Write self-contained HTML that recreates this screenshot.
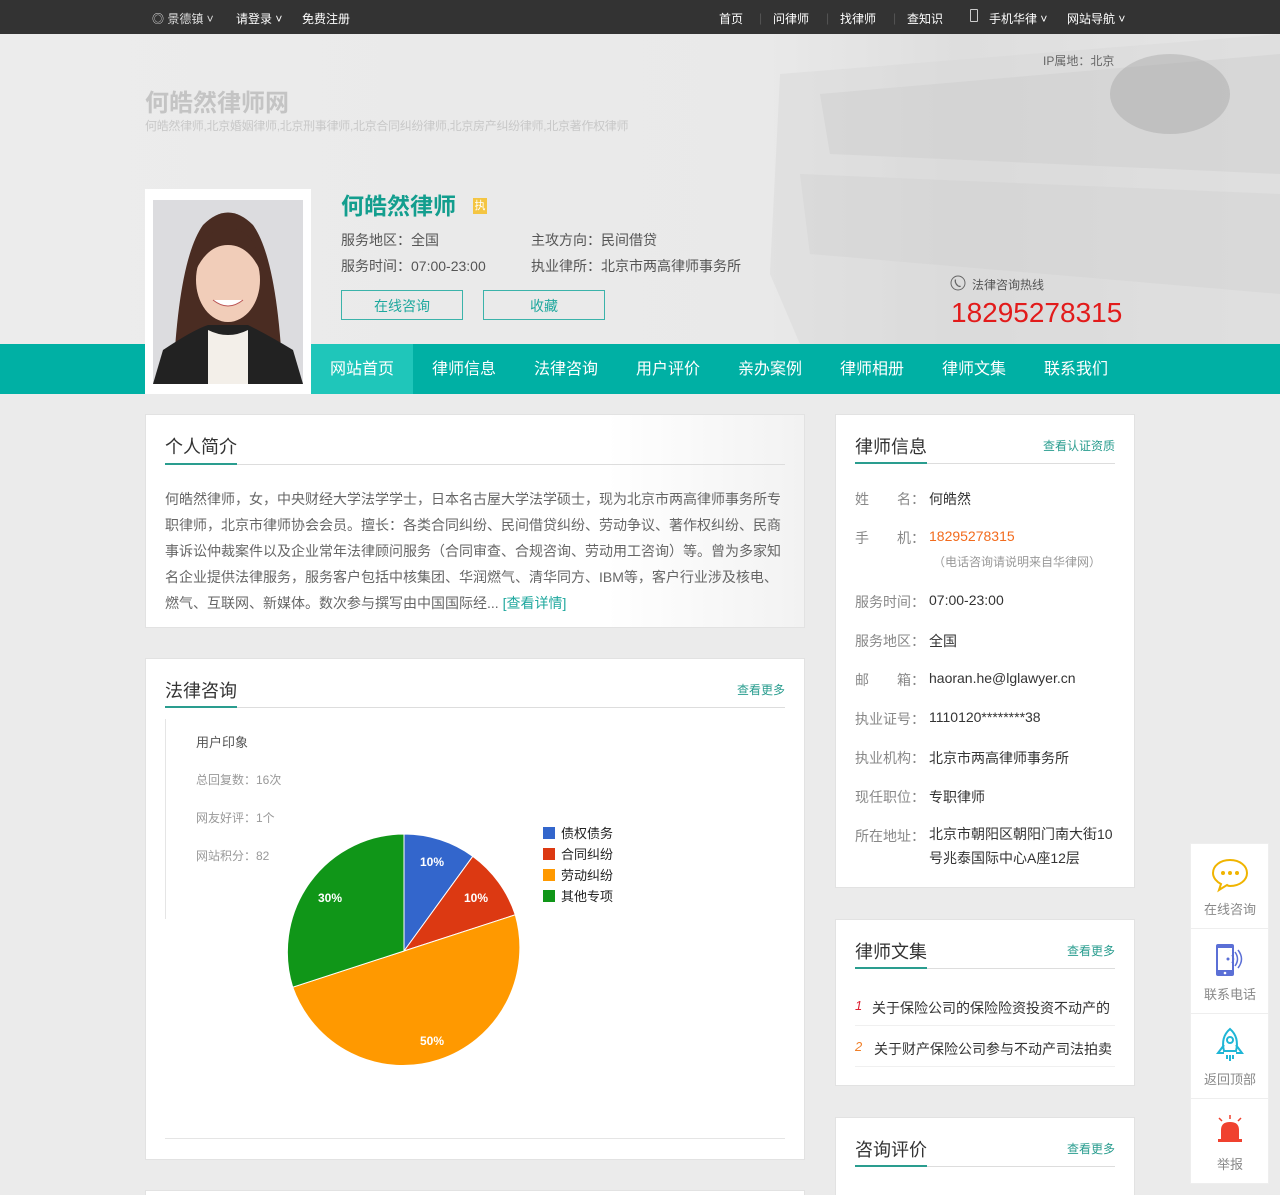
<!DOCTYPE html>
<html><head><meta charset="utf-8"><style>
*{margin:0;padding:0;box-sizing:border-box}
html,body{width:1280px;height:1195px;overflow:hidden}
body{background:#ebebeb;font-family:"Liberation Sans","Noto Sans CJK SC",sans-serif;color:#333;position:relative}
.a{position:absolute;white-space:nowrap}
.top{position:absolute;left:0;top:0;width:1280px;height:34px;background:#333;color:#fff;font-size:12px}
.hero{position:absolute;left:0;top:34px;width:1280px;height:310px;background:linear-gradient(90deg,#ececec 0%,#e9e9e9 60%,#dedede 75%,#e6e6e6 100%);overflow:hidden}
.nav{position:absolute;left:0;top:344px;width:1280px;height:50px;background:#00b0a4}
.nav span{position:absolute;top:0;height:50px;line-height:52px;color:#fff;font-size:16px;width:102px;text-align:center}
.card{position:absolute;background:#fff;border:1px solid #e2e2e2}
.h{position:absolute;font-size:18px;color:#333}
.ul{position:absolute;height:2px;background:#2a9d8f}
.ln{position:absolute;height:1px;background:#ddd}
.more{position:absolute;font-size:12px;color:#2a9d8f}
.lab{color:#888}
.btn{position:absolute;top:290px;width:122px;height:30px;border:1px solid #3bb3aa;color:#1fa89e;font-size:14px;text-align:center;line-height:30px;background:transparent}
</style></head><body>
<div class="top">
<span class="a" style="left:152px;top:10px;color:#ddd">◎ 景德镇 ˅</span>
<span class="a" style="left:236px;top:10px">请登录 ˅</span>
<span class="a" style="left:302px;top:10px">免费注册</span>
<span class="a" style="left:719px;top:10px">首页</span>
<span class="a" style="left:759px;top:11px;color:#555">|</span>
<span class="a" style="left:773px;top:10px">问律师</span>
<span class="a" style="left:826px;top:11px;color:#555">|</span>
<span class="a" style="left:840px;top:10px">找律师</span>
<span class="a" style="left:893px;top:11px;color:#555">|</span>
<span class="a" style="left:907px;top:10px">查知识</span>
<span class="a" style="left:970px;top:9px;width:8px;height:13px;border:1px solid #ccc;border-radius:1px"></span>
<span class="a" style="left:989px;top:10px">手机华律 ˅</span>
<span class="a" style="left:1067px;top:10px">网站导航 ˅</span>
</div>
<div class="hero">
<svg class="a" style="left:740px;top:0" width="540" height="310"><path d="M40 40 L540 0 L540 310 L60 310 L30 240 Z" fill="#d8d8d8" opacity=".45"/><path d="M80 60 L540 20 L540 140 L90 120 Z" fill="#c8c8c8" opacity=".35"/><path d="M60 140 L540 160 L540 260 L70 220 Z" fill="#cfcfcf" opacity=".35"/><ellipse cx="430" cy="60" rx="60" ry="40" fill="#999" opacity=".35"/></svg>
<span class="a" style="left:1043px;top:18px;font-size:12px;color:#666">IP属地：北京</span>
<span class="a" style="left:145px;top:49px;font-size:24px;font-weight:bold;color:#c4c4c4">何皓然律师网</span>
<span class="a" style="left:145px;top:83px;font-size:12px;color:#c8c8c8;letter-spacing:-0.3px">何皓然律师,北京婚姻律师,北京刑事律师,北京合同纠纷律师,北京房产纠纷律师,北京著作权律师</span>
<span class="a" style="left:341px;top:153px;font-size:23px;font-weight:bold;color:#139e8e">何皓然律师</span>
<span class="a" style="left:473px;top:164px;width:14px;height:16px;background:#f4c542;color:#fff;font-size:11px;text-align:center;line-height:16px">执</span>
<span class="a" style="left:341px;top:196px;font-size:14px;color:#555">服务地区：全国</span>
<span class="a" style="left:531px;top:196px;font-size:14px;color:#555">主攻方向：民间借贷</span>
<span class="a" style="left:341px;top:222px;font-size:14px;color:#555">服务时间：07:00-23:00</span>
<span class="a" style="left:531px;top:222px;font-size:14px;color:#555">执业律所：北京市两高律师事务所</span>
<svg class="a" style="left:950px;top:241px" width="16" height="16"><circle cx="8" cy="8" r="7" fill="none" stroke="#666"/><path d="M5.5 4.5 q-1 3 2 6 q2 1.5 3 .5" fill="none" stroke="#666" stroke-width="1.3"/></svg>
<span class="a" style="left:972px;top:242px;font-size:12px;color:#555">法律咨询热线</span>
<span class="a" style="left:951px;top:263px;font-size:28px;color:#e21b1b">18295278315</span>
</div>
<div class="btn" style="left:341px">在线咨询</div>
<div class="btn" style="left:483px">收藏</div>
<div class="nav">
<span style="left:311px;background:#1fc6ba">网站首页</span>
<span style="left:413px">律师信息</span><span style="left:515px">法律咨询</span><span style="left:617px">用户评价</span><span style="left:719px">亲办案例</span><span style="left:821px">律师相册</span><span style="left:923px">律师文集</span><span style="left:1025px">联系我们</span>
</div>
<div class="a" style="left:145px;top:189px;width:166px;height:205px;background:#fff"></div>
<svg class="a" style="left:153px;top:200px" width="150" height="184"><rect width="150" height="184" fill="#dcdcdf"/><path d="M20 184 Q25 60 50 25 Q75 0 100 25 Q125 60 130 184 Z" fill="#4a2c22"/><ellipse cx="75" cy="80" rx="32" ry="42" fill="#f1cdb9"/><path d="M43 70 Q45 30 75 28 Q105 30 107 70 Q95 45 75 45 Q55 45 43 70Z" fill="#4a2c22"/><path d="M60 100 Q75 112 90 100" fill="#fff" stroke="#b55" stroke-width="1"/><path d="M0 184 L10 150 Q40 130 55 125 L95 125 Q115 135 140 150 L150 184 Z" fill="#222"/><path d="M55 130 Q75 140 95 130 L95 184 L55 184 Z" fill="#f3efe9"/></svg>

<div class="card" style="left:145px;top:414px;width:660px;height:214px;background:linear-gradient(90deg,#fff 70%,#f2f2f2)">
<div class="h" style="left:19px;top:18px">个人简介</div>
<div class="ul" style="left:19px;top:48px;width:72px"></div><div class="ln" style="left:91px;top:49px;width:548px"></div>
<div class="a" style="left:19px;top:71px;width:622px;white-space:normal;font-size:14px;line-height:26px;color:#666">何皓然律师，女，中央财经大学法学学士，日本名古屋大学法学硕士，现为北京市两高律师事务所专职律师，北京市律师协会会员。擅长：各类合同纠纷、民间借贷纠纷、劳动争议、著作权纠纷、民商事诉讼仲裁案件以及企业常年法律顾问服务（合同审查、合规咨询、劳动用工咨询）等。曾为多家知名企业提供法律服务，服务客户包括中核集团、华润燃气、清华同方、IBM等，客户行业涉及核电、燃气、互联网、新媒体。数次参与撰写由中国国际经... <span style="color:#1fa89e">[查看详情]</span></div>
</div>

<div class="card" style="left:145px;top:658px;width:660px;height:502px">
<div class="h" style="left:19px;top:18px">法律咨询</div>
<div class="more" style="left:591px;top:22px">查看更多</div>
<div class="ul" style="left:19px;top:47px;width:72px"></div><div class="ln" style="left:91px;top:48px;width:548px"></div>
<div class="a" style="left:19px;top:60px;width:1px;height:200px;background:#e5e5e5"></div>
<span class="a" style="left:50px;top:73px;font-size:13px;color:#555">用户印象</span>
<span class="a" style="left:50px;top:112px;font-size:12px;color:#999">总回复数：16次</span>
<span class="a" style="left:50px;top:150px;font-size:12px;color:#999">网友好评：1个</span>
<span class="a" style="left:50px;top:188px;font-size:12px;color:#999">网站积分：82</span>
<svg class="a" style="left:0;top:0" width="660" height="480" font-family="Liberation Sans" font-size="12" font-weight="bold" fill="#fff">
<g transform="translate(-145,-658)">
<path d="M403 950 L403 833 A117 118 0 0 1 471.8 855.3Z" fill="#3366cc" stroke="#fff"/>
<path d="M403 950 L471.8 855.3 A117 118 0 0 1 514.3 913.8Z" fill="#dc3912" stroke="#fff"/>
<path d="M403 950 L514.3 913.8 A117 118 0 0 1 291.7 986.2Z" fill="#ff9900" stroke="#fff"/>
<path d="M403 950 L291.7 986.2 A117 118 0 0 1 403 833Z" fill="#109618" stroke="#fff"/>
<text x="419" y="865">10%</text><text x="463" y="901">10%</text><text x="317" y="901">30%</text><text x="419" y="1044">50%</text>
<g font-weight="normal" fill="#222" font-family="Liberation Sans,Noto Sans CJK SC" font-size="13">
<rect x="542" y="826" width="12" height="12" fill="#3366cc"/><text x="560" y="837">债权债务</text>
<rect x="542" y="847" width="12" height="12" fill="#dc3912"/><text x="560" y="858">合同纠纷</text>
<rect x="542" y="868" width="12" height="12" fill="#ff9900"/><text x="560" y="879">劳动纠纷</text>
<rect x="542" y="889" width="12" height="12" fill="#109618"/><text x="560" y="900">其他专项</text>
</g></g></svg>
<div class="ln" style="left:19px;top:479px;width:620px;background:#e5e5e5"></div>
</div>
<div class="card" style="left:145px;top:1190px;width:660px;height:20px"></div>

<div class="card" style="left:835px;top:414px;width:300px;height:474px;font-size:14px">
<div class="h" style="left:19px;top:18px">律师信息</div>
<div class="more" style="left:207px;top:22px">查看认证资质</div>
<div class="ul" style="left:19px;top:47px;width:72px"></div><div class="ln" style="left:91px;top:48px;width:188px"></div>
<span class="a lab" style="left:19px;top:74px">姓　　名：</span><span class="a" style="left:93px;top:74px">何皓然</span>
<span class="a lab" style="left:19px;top:113px">手　　机：</span><span class="a" style="left:93px;top:113px;color:#f26b1d">18295278315</span>
<span class="a" style="left:97px;top:138px;font-size:12px;color:#999">（电话咨询请说明来自华律网）</span>
<span class="a lab" style="left:19px;top:177px">服务时间：</span><span class="a" style="left:93px;top:177px">07:00-23:00</span>
<span class="a lab" style="left:19px;top:216px">服务地区：</span><span class="a" style="left:93px;top:216px">全国</span>
<span class="a lab" style="left:19px;top:255px">邮　　箱：</span><span class="a" style="left:93px;top:255px">haoran.he@lglawyer.cn</span>
<span class="a lab" style="left:19px;top:294px">执业证号：</span><span class="a" style="left:93px;top:294px">1110120********38</span>
<span class="a lab" style="left:19px;top:333px">执业机构：</span><span class="a" style="left:93px;top:333px">北京市两高律师事务所</span>
<span class="a lab" style="left:19px;top:372px">现任职位：</span><span class="a" style="left:93px;top:372px">专职律师</span>
<span class="a lab" style="left:19px;top:411px">所在地址：</span><span class="a" style="left:93px;top:407px;line-height:24px">北京市朝阳区朝阳门南大街10<br>号兆泰国际中心A座12层</span>
</div>

<div class="card" style="left:835px;top:919px;width:300px;height:167px;font-size:14px">
<div class="h" style="left:19px;top:18px">律师文集</div>
<div class="more" style="left:231px;top:22px">查看更多</div>
<div class="ul" style="left:19px;top:47px;width:72px"></div><div class="ln" style="left:91px;top:48px;width:188px"></div>
<span class="a" style="left:19px;top:78px;color:#d23;font-style:italic;font-size:13px">1</span><span class="a" style="left:36px;top:78px">关于保险公司的保险险资投资不动产的</span>
<div class="ln" style="left:19px;top:105px;width:260px;background:#f0f0f0"></div>
<span class="a" style="left:19px;top:119px;color:#f0802a;font-style:italic;font-size:13px">2</span><span class="a" style="left:38px;top:119px">关于财产保险公司参与不动产司法拍卖</span>
<div class="ln" style="left:19px;top:146px;width:260px;background:#f0f0f0"></div>
</div>

<div class="card" style="left:835px;top:1117px;width:300px;height:100px">
<div class="h" style="left:19px;top:18px">咨询评价</div>
<div class="more" style="left:231px;top:22px">查看更多</div>
<div class="ul" style="left:19px;top:47px;width:72px"></div><div class="ln" style="left:91px;top:48px;width:188px"></div>
</div>

<div class="a" style="left:1190px;top:843px;width:79px;height:341px;background:#fff;border:1px solid #eee"></div>
<div class="a" style="left:1191px;top:928px;width:77px;height:1px;background:#eee"></div>
<div class="a" style="left:1191px;top:1013px;width:77px;height:1px;background:#eee"></div>
<div class="a" style="left:1191px;top:1098px;width:77px;height:1px;background:#eee"></div>
<svg class="a" style="left:1211px;top:857px" width="38" height="36"><path d="M19 3 C9 3 2 9 2 16 C2 21 6 25 10 27 L8 33 L16 28 C17 29 18 29 19 29 C29 29 36 23 36 16 C36 9 29 3 19 3Z" fill="none" stroke="#f0b400" stroke-width="2"/><circle cx="12" cy="16" r="2" fill="#f0b400"/><circle cx="19" cy="16" r="2" fill="#f0b400"/><circle cx="26" cy="16" r="2" fill="#f0b400"/></svg>
<span class="a" style="left:1204px;top:899px;font-size:13px;color:#888">在线咨询</span>
<svg class="a" style="left:1214px;top:943px" width="34" height="34"><rect x="2" y="1" width="18" height="32" rx="2" fill="#5b6fd6"/><rect x="4" y="5" width="14" height="22" fill="#fff"/><circle cx="11" cy="30" r="1.3" fill="#fff"/><circle cx="14" cy="16" r="1.5" fill="#5b6fd6"/><path d="M18 12 q3 4 0 8 M21 9 q5 7 0 14 M24 7 q7 9 0 18" fill="none" stroke="#5b6fd6" stroke-width="1.5"/></svg>
<span class="a" style="left:1204px;top:984px;font-size:13px;color:#888">联系电话</span>
<svg class="a" style="left:1214px;top:1027px" width="32" height="36"><path d="M16 2 C9 8 8 16 10 24 L22 24 C24 16 23 8 16 2Z" fill="none" stroke="#1fb6d6" stroke-width="2"/><circle cx="16" cy="13" r="3" fill="none" stroke="#1fb6d6" stroke-width="2"/><path d="M10 18 L4 26 L10 26 M22 18 L28 26 L22 26 M13 28 v4 M16 28 v6 M19 28 v4" fill="none" stroke="#1fb6d6" stroke-width="2"/></svg>
<span class="a" style="left:1204px;top:1069px;font-size:13px;color:#888">返回顶部</span>
<svg class="a" style="left:1214px;top:1114px" width="32" height="30"><path d="M7 26 L7 16 Q7 8 16 8 Q25 8 25 16 L25 26Z" fill="#f0412f"/><rect x="4" y="25" width="24" height="3" fill="#f0412f"/><path d="M5 4 l3 3 M16 1 v4 M27 4 l-3 3" stroke="#f0412f" stroke-width="1.5"/></svg>
<span class="a" style="left:1217px;top:1154px;font-size:13px;color:#888">举报</span>
</body></html>
